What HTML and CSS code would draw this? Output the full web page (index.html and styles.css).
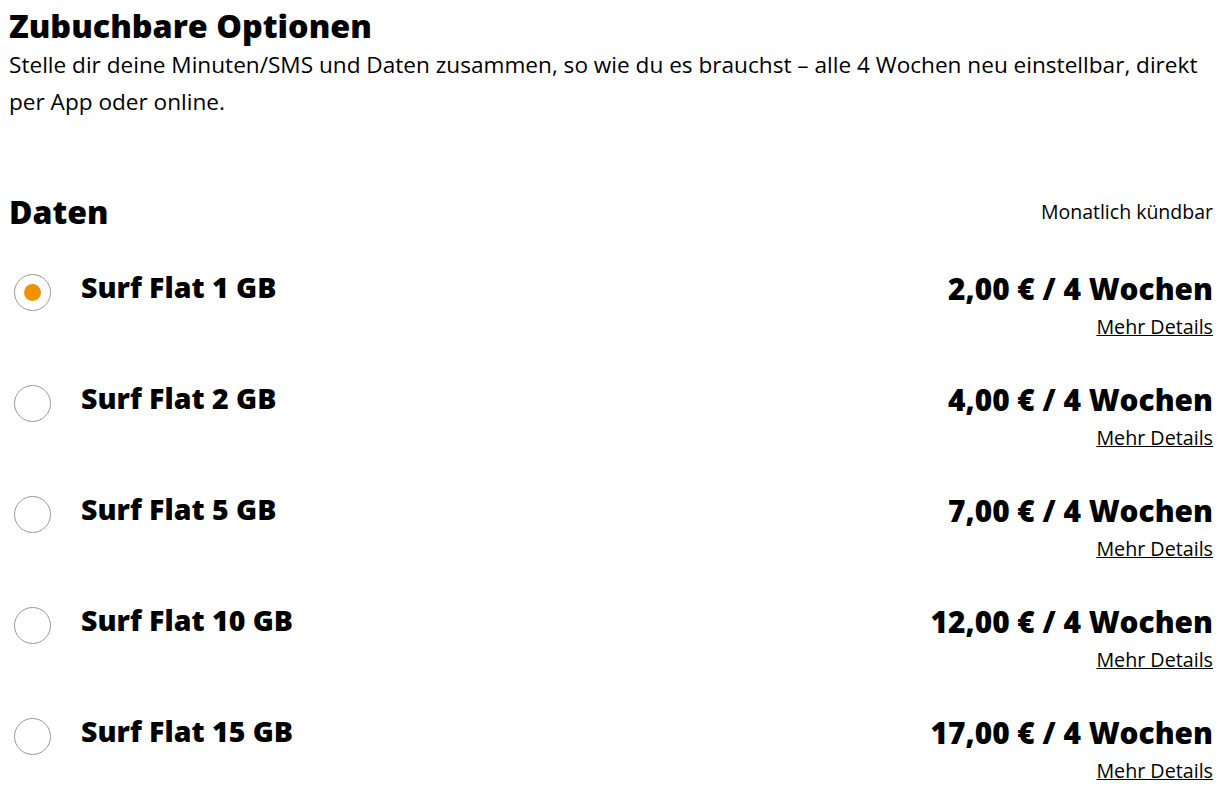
FILE: index.html
```html
<!DOCTYPE html>
<html lang="de">
<head>
<meta charset="utf-8">
<link rel="stylesheet" href="styles.css">
</head>
<body>
<main class="page">
  <section class="intro">
    <h1 class="title">Zubuchbare Optionen</h1>
    <p class="lead">Stelle dir deine Minuten/SMS und Daten zusammen, so wie du es brauchst – alle 4 Wochen neu einstellbar, direkt per App oder online.</p>
  </section>
  <section class="group">
    <header class="group-head">
      <h2 class="group-title">Daten</h2>
      <span class="group-note">Monatlich kündbar</span>
    </header>
    <ul class="options">
      <li class="option">
        <span class="radio radio-on"></span>
        <span class="opt-name">Surf Flat 1 GB</span>
        <div class="opt-price"><span class="price">2,00 € / 4 Wochen</span><a class="details" href="#">Mehr Details</a></div>
      </li>
      <li class="option">
        <span class="radio"></span>
        <span class="opt-name">Surf Flat 2 GB</span>
        <div class="opt-price"><span class="price">4,00 € / 4 Wochen</span><a class="details" href="#">Mehr Details</a></div>
      </li>
      <li class="option">
        <span class="radio"></span>
        <span class="opt-name">Surf Flat 5 GB</span>
        <div class="opt-price"><span class="price">7,00 € / 4 Wochen</span><a class="details" href="#">Mehr Details</a></div>
      </li>
      <li class="option">
        <span class="radio"></span>
        <span class="opt-name">Surf Flat 10 GB</span>
        <div class="opt-price"><span class="price">12,00 € / 4 Wochen</span><a class="details" href="#">Mehr Details</a></div>
      </li>
      <li class="option">
        <span class="radio"></span>
        <span class="opt-name">Surf Flat 15 GB</span>
        <div class="opt-price"><span class="price">17,00 € / 4 Wochen</span><a class="details" href="#">Mehr Details</a></div>
      </li>
    </ul>
  </section>
</main>
</body>
</html>
```
FILE: styles.css
```css
* { box-sizing: border-box; }
html, body { margin: 0; padding: 0; background: #fff; }
body { font-family: "Open Sans", "Liberation Sans", sans-serif; color: #000; }
.page { padding: 4px 15px 0 9px; }
.title { margin: 0; font-size: 32.3px; font-weight: 800; line-height: 42px; }
.lead { margin: 0; font-size: 22.6px; line-height: 37px; }
.group { margin-top: 71px; }
.group-head { display: flex; justify-content: space-between; align-items: center; height: 40px; }
.group-title { margin: 0; font-size: 32px; font-weight: 800; }
.group-note { font-size: 19.5px; }
.options { list-style: none; margin: 16px 0 0; padding: 0; }
.option { display: flex; align-items: flex-start; height: 111px; }
.radio { width: 37px; height: 37px; border: 1px solid #999; border-radius: 50%; margin: 27px 30px 0 5px; flex: none; display: flex; align-items: center; justify-content: center; }
.radio-on::after { content: ""; width: 17px; height: 17px; border-radius: 50%; background: #f09100; }
.opt-name { font-size: 28.5px; font-weight: 800; line-height: 40px; margin-top: 20px; }
.opt-price { margin-left: auto; display: flex; flex-direction: column; align-items: flex-end; margin-top: 22px; }
.price { font-size: 29.8px; font-weight: 800; line-height: 40px; }
.details { color: #000; font-size: 19.7px; line-height: 26px; margin-top: 5px; }
```
